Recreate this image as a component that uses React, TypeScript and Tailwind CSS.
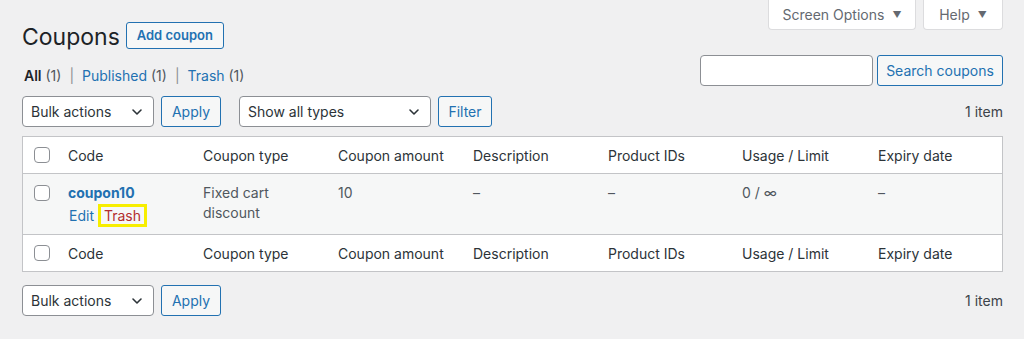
import React from 'react';

const font = { fontFamily: 'Inter, "Noto Sans", sans-serif' };

const Checkbox = () => (
  <span className="block w-4 h-4 rounded-[4px] border border-[#8c8f94] bg-white" />
);

const Chevron = () => (
  <svg width="16" height="16" viewBox="0 0 16 16" className="text-[#2c3338]">
    <path d="M4 6l4 4 4-4" fill="none" stroke="currentColor" strokeWidth="1.6" strokeLinecap="round" strokeLinejoin="round" />
  </svg>
);

const Select = ({ label, width }: { label: string; width: string }) => (
  <div className={`${width} h-[31px] flex items-center justify-between pl-2 pr-[8px] bg-white border border-[#8c8f94] rounded-[4px] text-[14px] text-[#2c3338]`}>
    <span>{label}</span>
    <Chevron />
  </div>
);

const Btn = ({ children, width }: { children: React.ReactNode; width: string }) => (
  <button className={`${width} h-[31px] flex items-center justify-center bg-[#f6f7f7] border border-[#2271b1] rounded-[3px] text-[14px] text-[#2271b1]`}>
    {children}
  </button>
);

const cols = 'grid grid-cols-[35px_135px_135px_135px_135px_134px_136px_136px]';
const headers = ['Code', 'Coupon type', 'Coupon amount', 'Description', 'Product IDs', 'Usage / Limit', 'Expiry date'];

const HeaderRow = ({ top }: { top?: boolean }) => (
  <div className={`${cols} h-[37px] items-center bg-white ${top ? 'border-b' : 'border-t'} border-[#c3c4c7] text-[14px] text-[#2c3338]`}>
    <div className="pl-[11px]"><Checkbox /></div>
    {headers.map(h => (
      <div key={h} className="pl-[10px]">{h}</div>
    ))}
  </div>
);

export default function App() {
  return (
    <div style={font} className="w-[1024px] h-[339px] bg-[#f0f0f1] pl-[22px] pr-[21px] overflow-hidden">
      <div className="flex items-start justify-between">
        <div className="mt-[22px] h-[27px] flex items-center gap-[6px]">
          <h1 className="text-[23px] leading-[27px] text-[#1d2327] font-normal translate-y-[2px]">Coupons</h1>
          <Btn width="w-[98px] !h-[27px] font-semibold !text-[13px]">Add coupon</Btn>
        </div>
        <div className="flex gap-[7px]">
          <div className="w-[148px] h-[30px] flex items-center justify-center gap-[8px] bg-white border border-t-0 border-[#dcdcde] rounded-b-[4px] text-[14px] text-[#646970]">
            Screen Options <span className="text-[9px]">▼</span>
          </div>
          <div className="w-[80px] h-[30px] flex items-center justify-center gap-[8px] bg-white border border-t-0 border-[#dcdcde] rounded-b-[4px] text-[14px] text-[#646970]">
            Help <span className="text-[9px]">▼</span>
          </div>
        </div>
      </div>

      <div className="flex items-end justify-between mt-[6px]">
        <div className="text-[14px] leading-[18px] text-[#50575e] pl-[2px] pb-[1px] flex gap-[8px]">
          <span><b className="text-[#1d2327] font-semibold">All</b> (1)</span>
          <span className="text-[#8c8f94]">|</span>
          <span><span className="text-[#2271b1]">Published</span> (1)</span>
          <span className="text-[#8c8f94]">|</span>
          <span><span className="text-[#2271b1]">Trash</span> (1)</span>
        </div>
        <div className="flex items-center gap-[4px]">
          <div className="w-[173px] h-[31px] bg-white border border-[#8c8f94] rounded-[4px]" />
          <Btn width="w-[126px]">Search coupons</Btn>
        </div>
      </div>

      <div className="flex items-center justify-between mt-[10px]">
        <div className="flex items-center gap-[7px]">
          <Select label="Bulk actions" width="w-[132px]" />
          <Btn width="w-[60px]">Apply</Btn>
          <div className="w-[4px]" />
          <Select label="Show all types" width="w-[192px]" />
          <Btn width="w-[54px]">Filter</Btn>
        </div>
        <span className="text-[14px] text-[#3c434a]">1 item</span>
      </div>

      <div className="mt-[9px] border border-[#c3c4c7] bg-white">
        <HeaderRow top />
        <div className={`${cols} h-[60px] items-start bg-[#f6f7f7] pt-[10px] text-[14px] text-[#50575e]`}>
          <div className="pl-[11px] pt-[1px]"><Checkbox /></div>
          <div className="pl-[10px]">
            <div className="font-bold text-[#2271b1] leading-[18px]">coupon10</div>
            <div className="flex items-center mt-[2px]">
              <span className="text-[#2271b1] pl-[1px]">Edit</span>
              <span className="ml-[4px] px-[3px] h-[23px] flex items-center border-[3px] border-[#f7ee00] text-[#b32d2e]">Trash</span>
            </div>
          </div>
          <div className="pl-[10px] leading-[20px] -mt-[1px]">Fixed cart<br />discount</div>
          <div className="pl-[10px] leading-[18px]">10</div>
          <div className="pl-[10px] leading-[18px]">–</div>
          <div className="pl-[10px] leading-[18px]">–</div>
          <div className="pl-[10px] leading-[18px]">0 / ∞</div>
          <div className="pl-[10px] leading-[18px]">–</div>
        </div>
        <HeaderRow />
      </div>

      <div className="mt-[13px] flex items-center justify-between">
        <div className="flex items-center gap-[7px]">
          <Select label="Bulk actions" width="w-[132px]" />
          <Btn width="w-[60px]">Apply</Btn>
        </div>
        <span className="text-[14px] text-[#3c434a]">1 item</span>
      </div>
    </div>
  );
}
